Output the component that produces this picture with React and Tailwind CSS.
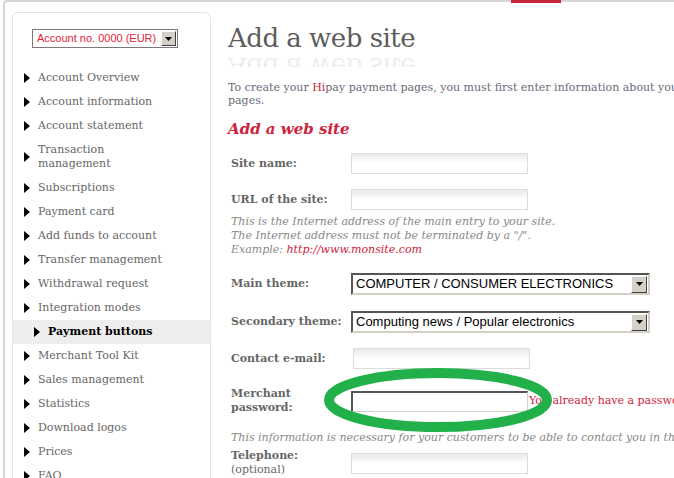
import React from "react";

const serif = { fontFamily: '"DejaVu Serif", Georgia, serif' };

const menu = [
  { label: "Account Overview" },
  { label: "Account information" },
  { label: "Account statement" },
  { label: ["Transaction", "management"] },
  { label: "Subscriptions" },
  { label: "Payment card" },
  { label: "Add funds to account" },
  { label: "Transfer management" },
  { label: "Withdrawal request" },
  { label: "Integration modes" },
  { label: "Payment buttons", active: true },
  { label: "Merchant Tool Kit" },
  { label: "Sales management" },
  { label: "Statistics" },
  { label: "Download logos" },
  { label: "Prices" },
  { label: "FAQ" },
];

function Arrow() {
  return (
    <svg width="6" height="10" viewBox="0 0 6 10" className="shrink-0">
      <path d="M0 0 L6 5 L0 10 Z" fill="#000" />
    </svg>
  );
}

function DropButton({ className }) {
  return (
    <div className={"flex items-center justify-center bg-[#d4d0c8] border border-t-white border-l-white border-b-[#404040] border-r-[#404040] " + className}>
      <svg width="7" height="4" viewBox="0 0 7 4">
        <path d="M0 0 H7 L3.5 4 Z" fill="#000" />
      </svg>
    </div>
  );
}

function TextInput({ className = "" }) {
  return (
    <div className={"h-[21px] w-[177px] border border-[#dcdcdc] bg-gradient-to-b from-[#e9e9e9] via-white to-white " + className} />
  );
}

function Select({ value }) {
  return (
    <div className="flex h-[22px] w-[299px] items-center border-2 border-t-[#555] border-l-[#555] border-b-[#d4d0c8] border-r-[#d4d0c8] bg-white pl-[3px] pr-[1px]">
      <span className="flex-1 text-[13px] text-black" style={{ fontFamily: '"Liberation Sans", Arial, sans-serif' }}>
        {value}
      </span>
      <DropButton className="h-[17px] w-[16px]" />
    </div>
  );
}

function Label({ children, className = "" }) {
  return (
    <div className={"w-[123px] shrink-0 pl-[3px] text-[11px] font-bold leading-[14px] text-[#666]" + " " + className}>
      {children}
    </div>
  );
}

export default function App() {
  return (
    <div className="relative h-[478px] w-[674px] overflow-hidden bg-white" style={serif}>
      <div className="ml-[3px] h-[490px] rounded-tl-[4px] border-l-2 border-t-2 border-[#d6d6d6]">
        <div className="flex pl-[7px] pt-[10px]">
          {/* sidebar */}
          <div className="h-[480px] w-[199px] shrink-0 rounded-t-[6px] border border-b-0 border-[#e3e3e3]">
            <div className="pl-[19px] pt-[16px]">
              <div className="flex h-[19px] w-[146px] items-center border border-[#7a7a7a] bg-white pl-[4px] pr-[1px]">
                <span className="flex-1 text-[11px] text-[#e8213a]" style={{ fontFamily: '"Liberation Sans", Arial, sans-serif' }}>
                  Account no. 0000 (EUR)
                </span>
                <DropButton className="h-[15px] w-[15px]" />
              </div>
            </div>
            <ul className="mt-[18px]">
              {menu.map((m, i) => (
                <li
                  key={i}
                  className={
                    "flex items-center gap-[8px] py-[5px] text-[11px] leading-[14px] " +
                    (m.active ? "bg-[#eeeeee] pl-[21px] font-bold text-black" : "pl-[11px] text-[#666]")
                  }
                >
                  <Arrow />
                  <span>
                    {Array.isArray(m.label) ? (
                      <>
                        {m.label[0]}
                        <br />
                        {m.label[1]}
                      </>
                    ) : (
                      m.label
                    )}
                  </span>
                </li>
              ))}
            </ul>
          </div>

          {/* main */}
          <div className="ml-[17px] w-[700px] shrink-0">
            <h1 className="mt-[9px] text-[26px] leading-[34px] tracking-[-0.5px] text-[#5c5c5c]">Add a web site</h1>
            <div aria-hidden="true" className="h-[12px] overflow-hidden">
              <div className="-translate-y-[5px] -scale-y-100 text-[26px] leading-[34px] tracking-[-0.5px] text-[#5c5c5c] opacity-[0.1]">
                Add a web site
              </div>
            </div>
            <p className="mt-[14px] text-[11px] leading-[13px] text-[#6a6a7a]">
              <span className="whitespace-nowrap">
                To create your <span className="text-[#d0213b]">Hi</span>pay payment pages, you must first enter information about your web site to be shown on your payment
              </span>
              <br />
              pages.
            </p>
            <h2 className="mt-[13px] text-[15px] font-bold italic leading-[18px] text-[#d0213b]">Add a web site</h2>

            <div className="mt-[15px] flex items-center">
              <Label>Site name:</Label>
              <TextInput />
            </div>
            <div className="mt-[15px] flex items-center">
              <Label>URL of the site:</Label>
              <TextInput />
            </div>
            <div className="mt-[5px] pl-[3px] text-[11px] italic leading-[14px] text-[#888]">
              This is the Internet address of the main entry to your site.
              <br />
              The Internet address must not be terminated by a "/".
              <br />
              Example: <span className="text-[#d0213b]">http://www.monsite.com</span>
            </div>

            <div className="mt-[16px] flex items-center">
              <Label>Main theme:</Label>
              <Select value="COMPUTER / CONSUMER ELECTRONICS" />
            </div>
            <div className="mt-[16px] flex items-center">
              <Label>Secondary theme:</Label>
              <Select value="Computing news / Popular electronics" />
            </div>
            <div className="mt-[15px] flex items-center">
              <Label>Contact e-mail:</Label>
              <TextInput className="ml-[2px]" />
            </div>
            <div className="mt-[18px] flex items-center">
              <Label>
                Merchant
                <br />
                password:
              </Label>
              <div className="h-[21px] w-[177px] border-2 border-b border-r border-t-[#555] border-l-[#555] border-b-[#d4d0c8] border-r-[#d4d0c8] bg-white" />
              <span className="ml-[1px] whitespace-nowrap text-[11px] text-[#d0213b]">You already have a password for your Hipay account</span>
            </div>
            <div className="mt-[16px] whitespace-nowrap pl-[3px] text-[11px] italic leading-[14px] text-[#888]">
              This information is necessary for your customers to be able to contact you in the event of a problem.
            </div>
            <div className="mt-[4px] flex items-center">
              <Label>
                Telephone:
                <br />
                <span className="font-normal">(optional)</span>
              </Label>
              <TextInput />
            </div>
          </div>
        </div>
      </div>

      {/* red tab marker */}
      <div className="absolute left-[511px] top-0 h-[3px] w-[50px] bg-[#c8253f]" />

      {/* green highlight ellipse drawn over the page */}
      <svg className="pointer-events-none absolute left-0 top-0" width="674" height="478">
        <ellipse cx="438" cy="400" rx="109" ry="27" fill="none" stroke="#22b04b" strokeWidth="10" />
      </svg>
    </div>
  );
}
